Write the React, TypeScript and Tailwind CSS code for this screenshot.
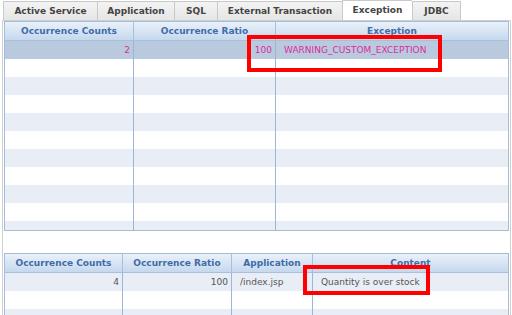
import React from 'react';

const TABS = [
  { label: 'Active Service', w: 'w-[94px]' },
  { label: 'Application', w: 'w-[77px]' },
  { label: 'SQL', w: 'w-[43px]' },
  { label: 'External Transaction', w: 'w-[125px]' },
  { label: 'Exception', w: 'w-[70px]', active: true },
  { label: 'JDBC', w: 'w-[49px]' },
];

const UPPER_COLS = ['w-[129px]', 'w-[142px]', 'flex-1'];
const LOWER_COLS = ['w-[118px]', 'w-[109px]', 'w-[81px]', 'flex-1'];

type Cell = { text?: string; align?: 'left' | 'right' };

const HeaderRow: React.FC<{ cols: string[]; labels: string[] }> = ({ cols, labels }) => (
  <div className="flex h-[19px] shrink-0 border-b border-[#a9c0dd] bg-gradient-to-b from-[#eaf1f9] to-[#c6d8ee]">
    {labels.map((label, i) => (
      <div
        key={label}
        className={`${cols[i]} flex items-center justify-center font-bold text-[#3f6ca8] ${
          i < labels.length - 1 ? 'border-r border-[#a9c0dd]' : ''
        }`}
      >
        {label}
      </div>
    ))}
  </div>
);

const BodyRow: React.FC<{ cols: string[]; cells: Cell[]; bg: string; color: string }> = ({ cols, cells, bg, color }) => (
  <div className={`flex h-[18px] shrink-0 ${bg} ${color}`}>
    {cols.map((c, i) => {
      const cell = cells[i] || {};
      return (
        <div
          key={i}
          className={`${c} flex items-center whitespace-nowrap ${
            cell.align === 'right' ? 'justify-end pr-[3px]' : 'justify-start pl-[8px]'
          } ${i < cols.length - 1 ? 'border-r border-[#9db6d4]' : ''}`}
        >
          {cell.text}
        </div>
      );
    })}
  </div>
);

export default function App() {
  const upperRows = Array.from({ length: 11 }, (_, i) => i);
  const lowerRows = Array.from({ length: 3 }, (_, i) => i);

  return (
    <div className="relative w-[512px] h-[315px] overflow-hidden bg-white font-['DejaVu_Sans',sans-serif] text-[9px] leading-none">
      {/* tabs */}
      <div className="flex h-[20px] items-end pl-[3px]">
        {TABS.map((t, i) => (
          <div
            key={t.label}
            className={`${t.w} flex items-center justify-center font-bold text-[#444] border-t border-l border-[#c9c9c9] ${
              i === TABS.length - 1 ? 'border-r' : ''
            } ${t.active ? 'h-[20px] bg-white' : 'h-[19px] bg-gradient-to-b from-[#f3f3f3] to-[#e6e6e6]'}`}
          >
            {t.label}
          </div>
        ))}
      </div>

      {/* panel */}
      <div className="ml-[2px] w-[509px] h-[300px] border-l border-r border-t border-[#d0d0d0] px-[1px]">
        {/* upper table */}
        <div className="h-[210px] border border-[#a3bcd9] flex flex-col overflow-hidden">
          <HeaderRow cols={UPPER_COLS} labels={['Occurrence Counts', 'Occurrence Ratio', 'Exception']} />
          {upperRows.map((r) => (
            <BodyRow
              key={r}
              cols={UPPER_COLS}
              bg={r === 0 ? 'bg-[#b9cadf]' : r % 2 === 0 ? 'bg-[#e9edf5]' : 'bg-white'}
              color="text-[#dc2a9e]"
              cells={
                r === 0
                  ? [
                      { text: '2', align: 'right' },
                      { text: '100', align: 'right' },
                      { text: 'WARNING_CUSTOM_EXCEPTION' },
                    ]
                  : []
              }
            />
          ))}
        </div>

        <div className="h-[22px]" />

        {/* lower table */}
        <div className="h-[80px] border border-[#a3bcd9] flex flex-col overflow-hidden">
          <HeaderRow cols={LOWER_COLS} labels={['Occurrence Counts', 'Occurrence Ratio', 'Application', 'Content']} />
          {lowerRows.map((r) => (
            <BodyRow
              key={r}
              cols={LOWER_COLS}
              bg={r % 2 === 0 ? 'bg-[#e9edf5]' : 'bg-white'}
              color="text-[#555]"
              cells={
                r === 0
                  ? [
                      { text: '4', align: 'right' },
                      { text: '100', align: 'right' },
                      { text: '/index.jsp' },
                      { text: 'Quantity is over stock' },
                    ]
                  : []
              }
            />
          ))}
        </div>
      </div>

      {/* annotation boxes */}
      <div className="absolute left-[247px] top-[35px] w-[195px] h-[37px] border-4 border-[#ff0000]" />
      <div className="absolute left-[303px] top-[265px] w-[127px] h-[30px] border-4 border-[#ff0000]" />
    </div>
  );
}
